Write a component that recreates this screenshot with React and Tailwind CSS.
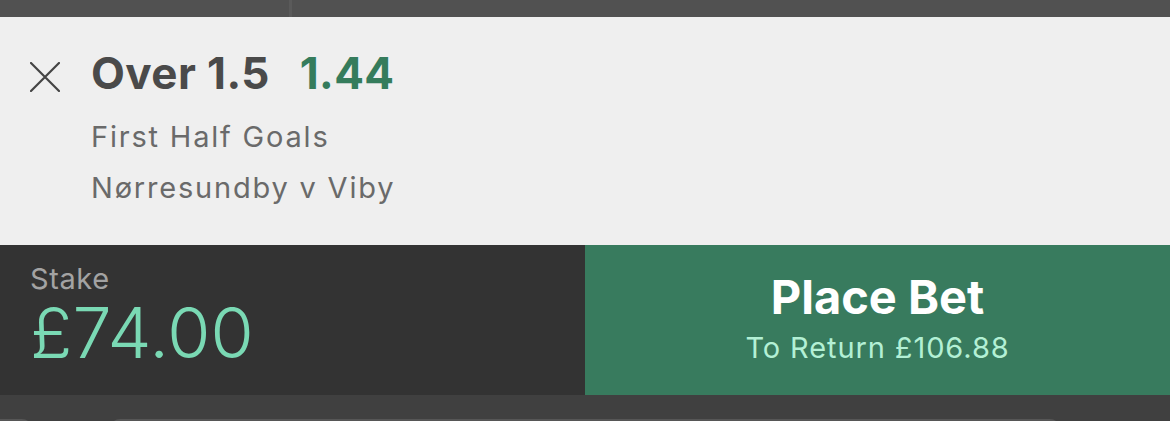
import React from 'react';

const font = { fontFamily: 'Inter, "Noto Sans", sans-serif' };

function CloseIcon() {
    return (
        <svg width="30" height="30" viewBox="0 0 30 30" className="shrink-0 text-[#444444]">
            <path d="M1 1 L29 29 M29 1 L1 29" stroke="currentColor" strokeWidth="2.2" strokeLinecap="round" />
        </svg>
    );
}

export default function App() {
    return (
        <div className="w-full h-[421px] flex flex-col bg-[#404040] overflow-hidden" style={font}>
            {/* header strip with the split line */}
            <div className="h-[17px] shrink-0 flex bg-[#515151]">
                <div className="w-[289px]" />
                <div className="w-[3px] bg-[#5a5a5a]" />
            </div>

            {/* selection details */}
            <div className="h-[228px] shrink-0 bg-[#efefef] flex items-start gap-[31px] pl-[30px] pt-[34px]">
                <div className="mt-[11px]">
                    <CloseIcon />
                </div>
                <div className="flex flex-col">
                    <div className="flex items-baseline gap-[30px] leading-none text-[44px] font-bold tracking-[0.4px]">
                        <span className="text-[#4a4a4a]">Over 1.5</span>
                        <span className="text-[#357c5c]">1.44</span>
                    </div>
                    <div className="mt-[27px] text-[29px] leading-none text-[#6a6a6a] tracking-[1.8px]">First Half Goals</div>
                    <div className="mt-[22px] text-[29px] leading-none text-[#6a6a6a] tracking-[1.8px]">Nørresundby v Viby</div>
                </div>
            </div>

            {/* stake + place bet */}
            <div className="h-[150px] shrink-0 flex">
                <div className="w-[585px] bg-[#333333] pl-[30px] pt-[19px]">
                    <div className="text-[29px] leading-none text-[#a3a3a3] tracking-[0.6px]">Stake</div>
                    <div className="mt-[5px] text-[70px] leading-none font-light text-[#7ad9b4]">£74.00</div>
                </div>
                <button className="flex-1 bg-[#387b5e] flex flex-col items-center pt-[28px]">
                    <span className="text-[47px] leading-none font-bold text-white">Place Bet</span>
                    <span className="mt-[13px] text-[29px] leading-none text-[#b3f0d5] tracking-[0.9px]">To Return £106.88</span>
                </button>
            </div>

            {/* tops of the fields below */}
            <div className="flex-1 relative">
                <div className="absolute top-[24px] left-[-60px] w-[92px] h-[20px] rounded-full bg-[#565656]" />
                <div className="absolute top-[24px] left-[110px] w-[950px] h-[20px] rounded-[14px] bg-[#565656]" />
            </div>
        </div>
    );
}
